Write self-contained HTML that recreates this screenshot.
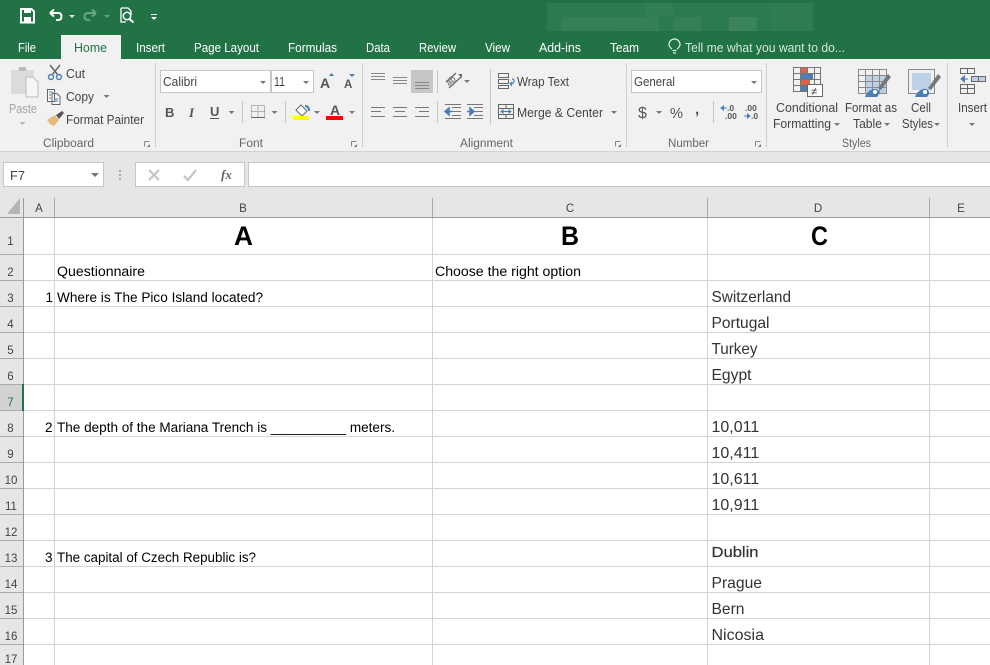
<!DOCTYPE html>
<html><head><meta charset="utf-8"><style>
html,body{margin:0;padding:0;background:#fff;width:990px;height:665px;overflow:hidden}
svg{display:block;position:absolute;left:0;top:0}
text{font-family:"Liberation Sans",sans-serif}
.tab{font-size:12.5px;fill:#fff}
.r{font-size:12.5px;fill:#444}
.l{font-size:11.5px;fill:#666}
.h{font-size:11.5px;fill:#444;text-anchor:middle}
.c{font-size:13.5px;fill:#000}
.a{font-size:16px;fill:#333}
.big{font-size:27px;font-weight:bold;fill:#000}
.g{stroke:#d4d4d4;stroke-width:1;fill:none;shape-rendering:crispEdges}
.i{stroke:#777;stroke-width:1;fill:none;shape-rendering:crispEdges}
.ar{fill:#777}
.box{fill:#fff;stroke:#c6c6c6;shape-rendering:crispEdges}
</style></head><body>
<svg width="990" height="665" viewBox="0 0 990 665" xmlns="http://www.w3.org/2000/svg">
<rect width="990" height="59" fill="#217346"/>
<g fill="#fff">
<rect x="547" y="3" width="266" height="28" opacity=".05"/>
<rect x="561" y="17" width="56" height="14" opacity=".04"/>
<rect x="617" y="17" width="42" height="14" opacity=".05"/>
<rect x="645" y="3" width="28" height="14" opacity=".03"/><rect x="673" y="17" width="28" height="14" opacity=".04"/>
<rect x="729" y="17" width="28" height="14" opacity=".07"/>
<rect x="771" y="3" width="42" height="28" opacity=".02"/>
</g>
<!-- QAT -->
<path d="M21 9h10.500l2.500 2.500v11h-13z" fill="none" stroke="#fff" stroke-width="2"/><rect x="24" y="9" width="7" height="4" fill="#fff"/><rect x="24" y="17" width="7" height="5" fill="#fff"/>
<path d="M50 13h8q3.500 0 3.500 3.500t-3.500 3.500h-2M50 13l4-3.500M50 13l4 3.500" fill="none" stroke="#fff" stroke-width="2"/>
<path d="M69 15h6l-3 3z" fill="#fff" opacity=".85"/>
<path d="M96 13h-8q-3.500 0-3.500 3.500t3.500 3.500h2M96 13l-4-3.500M96 13l-4 3.500" fill="none" stroke="#6aa285" stroke-width="2"/>
<path d="M104 15h6l-3 3z" fill="#6aa285"/>
<path d="M121 8h7l3 3v4M121 8v14h5" fill="none" stroke="#fff" stroke-width="1.300"/><circle cx="127" cy="16" r="3.700" fill="none" stroke="#fff" stroke-width="1.500"/><path d="M129.500 19l4 3.500" stroke="#fff" stroke-width="2"/>
<rect x="151" y="14" width="6" height="1" fill="#fff"/><path d="M151 17h6l-3 3z" fill="#fff"/>
<!-- tabs -->
<rect x="61" y="35" width="60" height="24" fill="#f1f1f1"/>
<text class="tab" x="18" y="52" textLength="18" lengthAdjust="spacingAndGlyphs">File</text>
<text class="tab" x="74" y="52" textLength="33" lengthAdjust="spacingAndGlyphs" style="fill:#217346">Home</text>
<text class="tab" x="136" y="52" textLength="29" lengthAdjust="spacingAndGlyphs">Insert</text>
<text class="tab" x="194" y="52" textLength="65" lengthAdjust="spacingAndGlyphs">Page Layout</text>
<text class="tab" x="288" y="52" textLength="49" lengthAdjust="spacingAndGlyphs">Formulas</text>
<text class="tab" x="366" y="52" textLength="24" lengthAdjust="spacingAndGlyphs">Data</text>
<text class="tab" x="419" y="52" textLength="37" lengthAdjust="spacingAndGlyphs">Review</text>
<text class="tab" x="485" y="52" textLength="25" lengthAdjust="spacingAndGlyphs">View</text>
<text class="tab" x="539" y="52" textLength="42" lengthAdjust="spacingAndGlyphs">Add-ins</text>
<text class="tab" x="610" y="52" textLength="29" lengthAdjust="spacingAndGlyphs">Team</text>
<path d="M673 53h3M672.500 50.500h4M672 49c-2-1.500-3-3-3-4.500a5.500 5.500 0 0 1 11 0c0 1.500-1 3-3 4.500" fill="none" stroke="#dfeee6" stroke-width="1.200"/>
<text class="tab" x="685" y="52" textLength="160" lengthAdjust="spacingAndGlyphs" style="fill:#d4e6dc">Tell me what you want to do...</text>
<!-- ribbon -->
<rect y="59" width="990" height="92" fill="#f1f1f1"/>
<rect y="151" width="990" height="47" fill="#e6e6e6"/>
<rect y="151" width="990" height="1" fill="#d2d2d2"/>
<path class="g" d="M155.500 63v84M362.500 63v84M626.500 63v84M766.500 63v84M947.500 63v84" style="stroke:#d0d0d0"/>
<!-- clipboard -->
<path d="M11 70h7v-2h8v2h8v24H11z" fill="#dcdadb"/><rect x="19" y="67" width="7" height="4" fill="#bdbbbc"/>
<path d="M26 77h7l5 5v15H26z" fill="#f6f4f6" stroke="#bdbdbd"/>
<text class="r" x="9" y="113" textLength="28" lengthAdjust="spacingAndGlyphs" style="fill:#a6a6a6">Paste</text>
<path d="M19.500 122h6l-3 3z" fill="#b5b5b5"/>
<path d="M50 65l8 10M60 65l-8 10" stroke="#666" stroke-width="1.500"/><circle cx="51" cy="77" r="2.500" fill="none" stroke="#4a7eb5" stroke-width="1.400"/><circle cx="59" cy="77" r="2.500" fill="none" stroke="#4a7eb5" stroke-width="1.400"/>
<text class="r" x="66" y="78" textLength="19" lengthAdjust="spacingAndGlyphs">Cut</text>
<path d="M47.500 89.500h7v12h-7zM52 93.500h5l3 3v8h-8z" fill="#f8f8f8" stroke="#666" shape-rendering="crispEdges"/><path d="M49 92h4M49 95h2M49 98h2M54 99h4M54 101h4" stroke="#4a7eb5"/>
<text class="r" x="66" y="101" textLength="28" lengthAdjust="spacingAndGlyphs">Copy</text>
<path class="ar" d="M103.500 95h6l-3 3z"/>
<path d="M47 120l8-5 4 5-5 6c-2-1-3 0-7-6z" fill="#e5bc7e"/><path d="M56 115l6-4 2 2-5 6z" fill="#555"/>
<text class="r" x="66" y="124" textLength="78" lengthAdjust="spacingAndGlyphs">Format Painter</text>
<text class="l" x="43" y="147" textLength="51" lengthAdjust="spacingAndGlyphs">Clipboard</text>
<path class="i" d="M144.500 141.500h5M144.500 141.500v5" style="stroke:#888"/><path d="M147 147l3-3v3z" fill="#777"/>
<!-- font -->
<rect class="box" x="160.500" y="70.500" width="110" height="22"/><rect class="box" x="271.500" y="70.500" width="42" height="22"/>
<text class="r" x="163" y="86" textLength="34" lengthAdjust="spacingAndGlyphs">Calibri</text>
<path class="ar" d="M260 81h6l-3 3z"/>
<text class="r" x="274" y="86" textLength="11" lengthAdjust="spacingAndGlyphs">11</text>
<path class="ar" d="M303 81h6l-3 3z"/>
<text x="320" y="88" style="font-size:14px;fill:#555;font-weight:bold">A</text><path d="M329 76l2.500-3 2.500 3z" fill="#4a7eb5"/>
<text x="344" y="88" style="font-size:11.500px;fill:#555;font-weight:bold">A</text><path d="M349 74h6l-3 3z" fill="#4a7eb5"/>
<text x="165" y="117" style="font-size:13px;font-weight:bold;fill:#555">B</text>
<text x="189" y="117" style="font-size:13px;font-style:italic;font-weight:bold;fill:#555;font-family:'Liberation Serif',serif">I</text>
<text x="210" y="116" style="font-size:13px;font-weight:bold;fill:#555">U</text><rect x="210" y="118" width="9" height="1" fill="#555"/>
<path class="ar" d="M228.500 111h6l-3 3z"/>
<path class="g" d="M242.500 101v22M285.500 101v22M437.500 70v23M437.500 101v22M490.500 69v55" style="stroke:#c6c6c6"/>
<path d="M251.500 105.500h13v12h-13zM258 105.500v12M251.500 111.500h13" fill="none" stroke="#777" stroke-dasharray="1 1" shape-rendering="crispEdges"/><rect x="251" y="117" width="14" height="1" fill="#666"/>
<path class="ar" d="M271.500 111h6l-3 3z"/>
<path d="M301 105l6 6-5 5-6-6z" fill="#fff" stroke="#666"/><path d="M305 106c3 0 4 2 4 5" fill="none" stroke="#4a7eb5" stroke-width="2"/>
<rect x="293" y="116" width="16" height="4" fill="#ffff00"/>
<path class="ar" d="M314 111h6l-3 3z"/>
<text x="330" y="115" style="font-size:14px;font-weight:bold;fill:#555">A</text><rect x="326" y="116" width="17" height="4" fill="#ff0000"/>
<path class="ar" d="M349 111h6l-3 3z"/>
<text class="l" x="239" y="147" textLength="24" lengthAdjust="spacingAndGlyphs">Font</text>
<path class="i" d="M351.500 141.500h5M351.500 141.500v5" style="stroke:#888"/><path d="M354 147l3-3v3z" fill="#777"/>
<!-- alignment -->
<rect x="411" y="70" width="22" height="23" fill="#c6c6c6"/>
<path class="i" d="M371 73.500h14M371 76.500h14M371 79.500h14M393 77.500h14M393 80.500h14M393 83.500h14M415 82.500h14M415 85.500h14M415 88.500h14" style="stroke:#888"/>
<path class="i" d="M371 107.500h14M371 111.500h10M371 116.500h14M393 107.500h14M395 111.500h10M393 116.500h14M415 107.500h14M419 111.500h10M415 116.500h14" style="stroke:#777"/>
<path d="M446 82l10-9M449 88l12-11" stroke="#666" stroke-width="1.200"/><path d="M458 74h4v4z" fill="#666"/><text x="445" y="84" transform="rotate(-40 450 80)" style="font-size:9px;fill:#555">ab</text>
<path class="ar" d="M464 80h6l-3 3z"/>
<path class="i" d="M452 107.500h9M452 111.500h9M452 115.500h9M445 104.500h16M445 118.500h16M474 107.500h9M474 111.500h9M474 115.500h9M467 104.500h16M467 118.500h16"/>
<path d="M445 111.500l4-3.500v7zM449 111.500h3" fill="#4a7eb5" stroke="#4a7eb5" stroke-width="1.500"/><path d="M474 111.500l-4-3.500v7zM467 111.500h3" fill="#4a7eb5" stroke="#4a7eb5" stroke-width="1.500"/>
<path class="i" d="M498.500 73.500h10v4h-10zM498.500 79.500h10v4h-10zM498.500 85.500h10v3h-10z" style="stroke:#666"/><path d="M512 79c3 0 3 5-2 5m0 0l2-2m-2 2l2 2" fill="none" stroke="#4a7eb5" stroke-width="1.200"/>
<text class="r" x="517" y="86" textLength="52" lengthAdjust="spacingAndGlyphs">Wrap Text</text>
<path class="i" d="M498.500 104.500h15v14h-15zM498.500 108.500h15M498.500 114.500h15M506 104.500v4M506 114.500v4" style="stroke:#666"/><path d="M501 111.500h10M501 111.500l2-1.500v3zM511 111.500l-2-1.500v3z" fill="#4a7eb5" stroke="#4a7eb5"/>
<text class="r" x="517" y="117" textLength="86" lengthAdjust="spacingAndGlyphs">Merge &amp; Center</text>
<path class="ar" d="M611 111h6l-3 3z"/>
<text class="l" x="460" y="147" textLength="53" lengthAdjust="spacingAndGlyphs">Alignment</text>
<path class="i" d="M615.500 141.500h5M615.500 141.500v5" style="stroke:#888"/><path d="M618 147l3-3v3z" fill="#777"/>
<!-- number -->
<rect class="box" x="631.500" y="70.500" width="130" height="22"/>
<text class="r" x="634" y="86" textLength="41" lengthAdjust="spacingAndGlyphs">General</text>
<path class="ar" d="M751 81h6l-3 3z"/>
<text x="638" y="118" style="font-size:16px;fill:#555">$</text><path class="ar" d="M656 111h6l-3 3z"/>
<text x="670" y="118" style="font-size:15px;fill:#555" textLength="13" lengthAdjust="spacingAndGlyphs">%</text>
<text x="695" y="114" style="font-size:15px;font-weight:bold;fill:#555">,</text>
<path class="g" d="M713.500 101v22" style="stroke:#c6c6c6"/>
<text x="727" y="111" style="font-size:8.500px;font-weight:bold;fill:#555">.0</text><text x="725" y="119" style="font-size:8.500px;font-weight:bold;fill:#555">.00</text>
<path d="M721 108h6M721 108l2.500-2v4z" fill="#4a7eb5" stroke="#4a7eb5"/>
<text x="745" y="111" style="font-size:8.500px;font-weight:bold;fill:#555">.00</text><text x="751" y="119" style="font-size:8.500px;font-weight:bold;fill:#555">.0</text>
<path d="M744 116h6M750 116l-2.500-2v4z" fill="#4a7eb5" stroke="#4a7eb5"/>
<text class="l" x="668" y="147" textLength="41" lengthAdjust="spacingAndGlyphs">Number</text>
<path class="i" d="M755.500 141.500h5M755.500 141.500v5" style="stroke:#888"/><path d="M758 147l3-3v3z" fill="#777"/>
<!-- styles -->
<path class="i" d="M793.500 67.500h27v24h-27zM793.500 73.500h27M793.500 79.500h27M793.500 85.500h27M800.500 67.500v24M807.500 67.500v24M814.500 67.500v24"/>
<rect x="801" y="68" width="6" height="5" fill="#dc6244"/><rect x="801" y="74" width="12" height="5" fill="#4a7eb5"/><rect x="801" y="80" width="9" height="5" fill="#dc6244"/><rect x="801" y="86" width="6" height="5" fill="#4a7eb5"/>
<rect x="807.500" y="84.500" width="15" height="12" fill="#fff" stroke="#666" shape-rendering="crispEdges"/>
<text x="811" y="95" style="font-size:11px;fill:#333">≠</text>
<rect x="866" y="76" width="21" height="17" fill="#bdd0e5"/>
<path class="i" d="M858.500 69.500h28v24h-28zM858.500 75.500h28M858.500 81.500h28M858.500 87.500h28M865.500 69.500v24M872.500 69.500v24M879.500 69.500v24" style="stroke:#8a8a8a"/>
<path d="M878 88l10-14 3 3-10 13z" fill="#777"/><path d="M865 97c1-4 6-9 11-8 4 1 4 5 1 8z" fill="#4a7eb5"/><circle cx="875" cy="92" r="2" fill="#fff"/>
<rect x="912" y="73" width="19" height="17" fill="#bdd0e5"/>
<path class="i" d="M908.500 69.500h26v24h-26z" style="stroke:#8a8a8a"/>
<path d="M928 88l10-14 3 3-10 13z" fill="#777"/><path d="M915 97c1-4 6-9 11-8 4 1 4 5 1 8z" fill="#4a7eb5"/><circle cx="925" cy="92" r="2" fill="#fff"/>
<text class="r" x="776" y="112" textLength="62" lengthAdjust="spacingAndGlyphs">Conditional</text>
<text class="r" x="773" y="128" textLength="58" lengthAdjust="spacingAndGlyphs">Formatting</text><path class="ar" d="M834 123h6l-3 3z"/>
<text class="r" x="845" y="112" textLength="52" lengthAdjust="spacingAndGlyphs">Format as</text>
<text class="r" x="853" y="128" textLength="29" lengthAdjust="spacingAndGlyphs">Table</text><path class="ar" d="M884 123h6l-3 3z"/>
<text class="r" x="911" y="112" textLength="20" lengthAdjust="spacingAndGlyphs">Cell</text>
<text class="r" x="902" y="128" textLength="31" lengthAdjust="spacingAndGlyphs">Styles</text><path class="ar" d="M934 123h6l-3 3z"/>
<text class="l" x="842" y="147" textLength="29" lengthAdjust="spacingAndGlyphs">Styles</text>
<!-- insert -->
<rect x="972" y="77" width="13" height="4" fill="#bdd0e5"/>
<path class="i" d="M960.500 68.500h14v5h-14zM967.500 68.500v5M971.500 76.500h14v5h-14zM978.500 76.500v5M960.500 84.500h14v9h-14zM967.500 84.500v9M960.500 88.500h14" style="stroke:#666"/>
<path d="M961 79h7M961 79l3.500-3v6z" fill="#4a7eb5" stroke="#4a7eb5"/>
<text class="r" x="958" y="112" textLength="29" lengthAdjust="spacingAndGlyphs">Insert</text>
<path class="ar" d="M969 123h6l-3 3z"/>
<!-- formula bar -->
<rect x="3.500" y="162.500" width="100" height="24" class="box"/>
<text class="r" x="10" y="180" textLength="15" lengthAdjust="spacingAndGlyphs">F7</text>
<path d="M91 173h8l-4 4z" fill="#777"/>
<path d="M120 170v2M120 174v2M120 178v2" stroke="#aaa" stroke-width="2"/>
<rect x="135.500" y="162.500" width="109" height="24" class="box"/>
<rect x="248.500" y="162.500" width="742" height="24" class="box"/>
<path d="M149 170l10 10M159 170l-10 10" stroke="#c4c4c4" stroke-width="2"/>
<path d="M184 176l4 4 8-10" fill="none" stroke="#c4c4c4" stroke-width="2.200"/>
<text x="221" y="179" style="font-family:'Liberation Serif',serif;font-size:13px;font-style:italic;font-weight:bold;fill:#666">fx</text>
<!-- headers -->
<rect y="198" width="990" height="19" fill="#e6e6e6"/>
<rect y="217" width="23" height="448" fill="#e6e6e6"/>
<path d="M20 198v16H7z" fill="#b5b5b5"/>
<!-- grid -->
<path class="g" d="M54.500 217v448M432.500 217v448M707.500 217v448M929.500 217v448"/>
<path class="g" d="M23 254.500h967M23 280.500h967M23 306.500h967M23 332.500h967M23 358.500h967M23 384.500h967M23 410.500h967M23 436.500h967M23 462.500h967M23 488.500h967M23 514.500h967M23 540.500h967M23 566.500h967M23 592.500h967M23 618.500h967M23 644.500h967"/>
<path class="g" d="M0 254.500h23M0 280.500h23M0 306.500h23M0 332.500h23M0 358.500h23M0 384.500h23M0 410.500h23M0 436.500h23M0 462.500h23M0 488.500h23M0 514.500h23M0 540.500h23M0 566.500h23M0 592.500h23M0 618.500h23M0 644.500h23" style="stroke:#aaa"/>
<path class="g" d="M23.500 198v19M54.500 198v19M432.500 198v19M707.500 198v19M929.500 198v19" style="stroke:#aaa"/>
<rect x="0" y="217" width="990" height="1" fill="#9b9b9b"/><rect x="23" y="198" width="1" height="467" fill="#9b9b9b"/>
<rect y="385" width="22" height="25" fill="#d2d2d2"/><rect x="22" y="384" width="2" height="27" fill="#217346"/>
<text class="h" x="39" y="212">A</text><text class="h" x="243" y="212">B</text><text class="h" x="570" y="212">C</text><text class="h" x="818" y="212">D</text><text class="h" x="961" y="212">E</text>
<text class="h" x="10.500" y="245">1</text><text class="h" x="10.500" y="276">2</text><text class="h" x="10.500" y="302">3</text><text class="h" x="10.500" y="328">4</text><text class="h" x="10.500" y="354">5</text><text class="h" x="10.500" y="380">6</text><text class="h" x="10.500" y="406" style="fill:#217346">7</text><text class="h" x="10.500" y="432">8</text><text class="h" x="10.500" y="458">9</text><text class="h" x="11" y="484">10</text><text class="h" x="11" y="510">11</text><text class="h" x="11" y="536">12</text><text class="h" x="11" y="562">13</text><text class="h" x="11" y="588">14</text><text class="h" x="11" y="614">15</text><text class="h" x="11" y="640">16</text><text class="h" x="11" y="663">17</text>
<!-- cells -->
<text class="big" x="234" y="245" textLength="19" lengthAdjust="spacingAndGlyphs">A</text>
<text class="big" x="561" y="245" textLength="18" lengthAdjust="spacingAndGlyphs">B</text>
<text class="big" x="811" y="245" textLength="17" lengthAdjust="spacingAndGlyphs">C</text>
<text class="c" x="57" y="276" textLength="88" lengthAdjust="spacingAndGlyphs">Questionnaire</text>
<text class="c" x="435" y="276" textLength="146" lengthAdjust="spacingAndGlyphs">Choose the right option</text>
<text class="c" x="45.500" y="302">1</text>
<text class="c" x="57" y="302" textLength="206" lengthAdjust="spacingAndGlyphs">Where is The Pico Island located?</text>
<text class="c" x="45" y="432">2</text>
<text class="c" x="57" y="432" textLength="338" lengthAdjust="spacingAndGlyphs">The depth of the Mariana Trench is __________ meters.</text>
<text class="c" x="45" y="562">3</text>
<text class="c" x="57" y="562" textLength="199" lengthAdjust="spacingAndGlyphs">The capital of Czech Republic is?</text>
<text class="a" x="711.500" y="302" textLength="79.500" lengthAdjust="spacingAndGlyphs">Switzerland</text>
<text class="a" x="711.500" y="328" textLength="58" lengthAdjust="spacingAndGlyphs">Portugal</text>
<text class="a" x="711.500" y="354" textLength="46" lengthAdjust="spacingAndGlyphs">Turkey</text>
<text class="a" x="711.500" y="380" textLength="40" lengthAdjust="spacingAndGlyphs">Egypt</text>
<text class="a" x="711.500" y="432">10,011</text>
<text class="a" x="711.500" y="458">10,411</text>
<text class="a" x="711.500" y="484">10,611</text>
<text class="a" x="711.500" y="510">10,911</text>
<text class="a" x="711.500" y="557" textLength="47" lengthAdjust="spacingAndGlyphs" style="font-size:15px;stroke:#333;stroke-width:.2">Dublin</text>
<text class="a" x="711.500" y="588" textLength="50.500" lengthAdjust="spacingAndGlyphs">Prague</text>
<text class="a" x="711.500" y="614" textLength="33" lengthAdjust="spacingAndGlyphs">Bern</text>
<text class="a" x="711.500" y="640" textLength="52.500" lengthAdjust="spacingAndGlyphs">Nicosia</text>
</svg>
</body></html>
